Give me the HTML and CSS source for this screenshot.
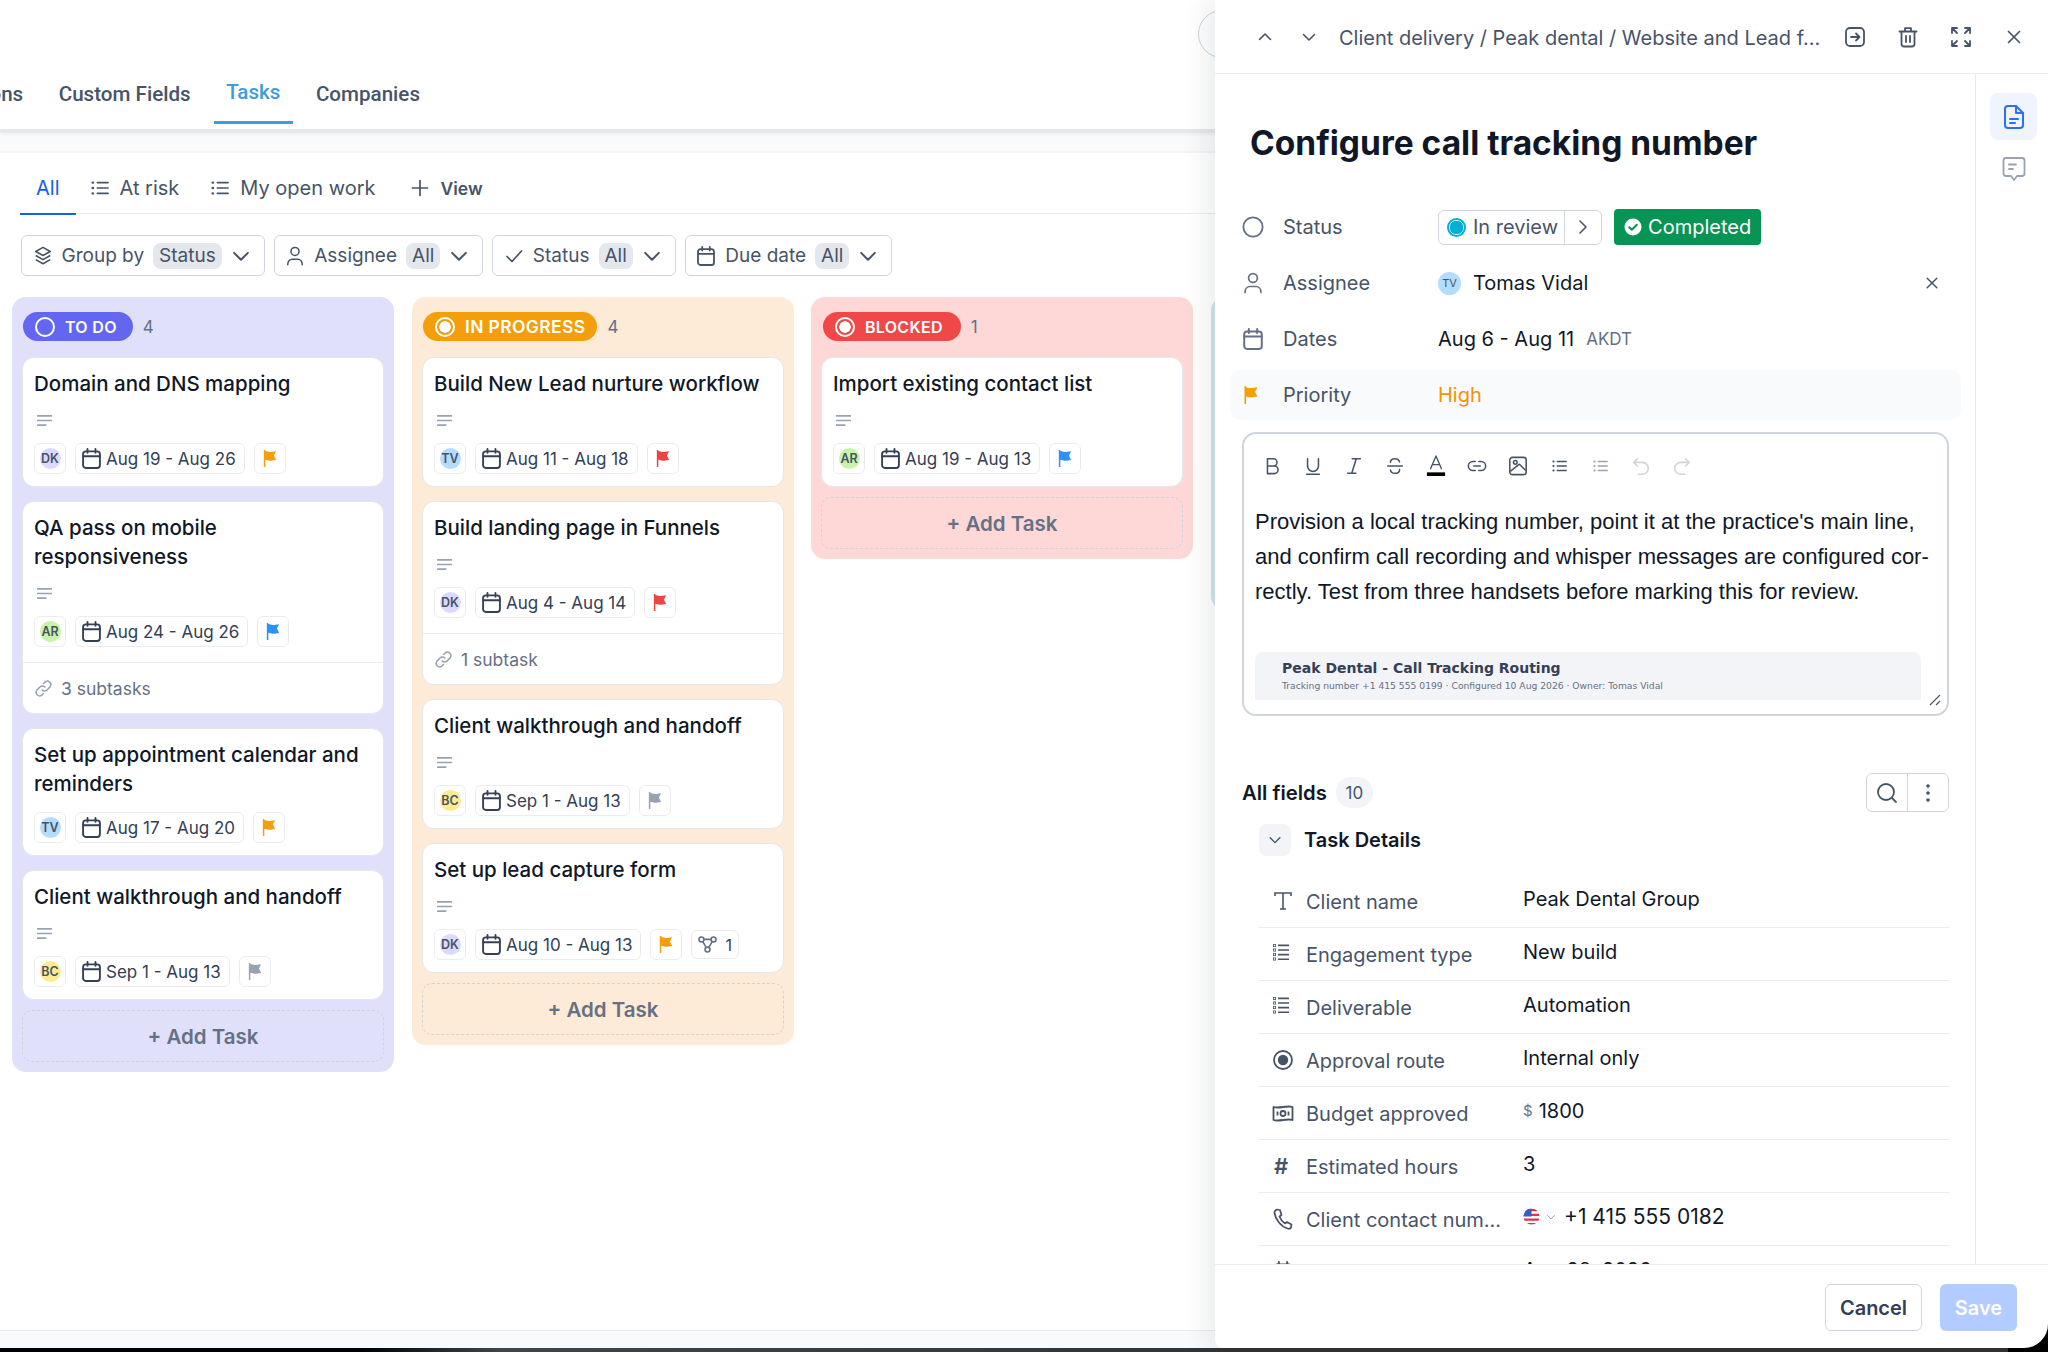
FILE: index.html
```html
<!DOCTYPE html>
<html lang="en">
<head>
<meta charset="utf-8">
<title>Tasks</title>
<link rel="stylesheet" href="styles.css">
</head>
<body>
<svg class="sprite" width="0" height="0" aria-hidden="true">
  <defs>
    <symbol id="flag" viewBox="0 0 16 20"><path fill="currentColor" d="M1.5 1h1.6v1.2c3 1.2 6 1 11.4.1l-2.4 4.6 2.4 4.6c-5.4.9-8.4 1.1-11.4-.1V19H1.5z"/></symbol>
    <symbol id="cal" viewBox="0 0 18 20"><g fill="none" stroke="currentColor" stroke-width="1.8" stroke-linecap="round"><rect x="1" y="3.2" width="16" height="15.8" rx="2.6"/><path d="M1 7.8h16M5.2 1v3.6M12.8 1v3.6"/></g></symbol>
    <symbol id="lines" viewBox="0 0 18 14"><path d="M1 2h16M1 7h16M1 12h10" fill="none" stroke="currentColor" stroke-width="1.8"/></symbol>
    <symbol id="link" viewBox="0 0 20 20"><g fill="none" stroke="currentColor" stroke-width="1.6" stroke-linecap="round"><path d="M8.5 11.5a3.6 3.6 0 0 0 5.2 0l3.2-3.2a3.7 3.7 0 0 0-5.2-5.2l-1.6 1.6"/><path d="M11.5 8.5a3.6 3.6 0 0 0-5.2 0l-3.2 3.2a3.7 3.7 0 0 0 5.2 5.2l1.6-1.6"/></g></symbol>
    <symbol id="chev" viewBox="0 0 16 16"><path d="M2.5 5.5 8 11l5.5-5.5" fill="none" stroke="currentColor" stroke-width="1.6" stroke-linecap="round" stroke-linejoin="round"/></symbol>
    <symbol id="list" viewBox="0 0 20 18"><g fill="none" stroke="currentColor" stroke-width="1.8" stroke-linecap="round"><path d="M7 3h12M7 9h12M7 15h12"/><path d="M1.8 3h.4M1.8 9h.4M1.8 15h.4" stroke-width="2.6"/></g></symbol>
    <symbol id="person" viewBox="0 0 20 22"><g fill="none" stroke="currentColor" stroke-width="1.7" stroke-linecap="round"><circle cx="10" cy="6" r="4.4"/><path d="M2 20.5c0-4 2.6-6 5-6h6c2.4 0 5 2 5 6"/></g></symbol>
    <symbol id="x" viewBox="0 0 16 16"><path d="m2.5 2.5 11 11m0-11-11 11" fill="none" stroke="currentColor" stroke-width="1.7" stroke-linecap="round"/></symbol>
    <symbol id="fieldlist" viewBox="0 0 18 18"><path fill="currentColor" d="M1 1h3v3H1zM6 1.6h11v1.6H6zM1 5.5h3v3H1zM6 6.2h11v1.6H6zM1 10h3v3H1zM6 10.8h11v1.6H6zM1 14.5h3v3H1zM6 15.4h11V17H6z"/><path fill="#fff" d="M1.8 1.8h1.4v1.4H1.8zM1.8 6.3h1.4v1.4H1.8zM1.8 10.8h1.4v1.4H1.8zM1.8 15.3h1.4v1.4H1.8z"/></symbol>
  </defs>
</svg>

<div class="screen">
  <header class="topbar">
    <div class="top-pill"></div>
    <nav class="tabs">
      <a class="tab">Automations</a>
      <a class="tab">Custom Fields</a>
      <a class="tab tab-active">Tasks</a>
      <a class="tab">Companies</a>
    </nav>
  </header>
  <div class="band"></div>

  <main class="main">
    <div class="views">
      <a class="view view-active">All</a>
      <a class="view"><svg class="ic18"><use href="#list"/></svg>At risk</a>
      <a class="view"><svg class="ic18"><use href="#list"/></svg>My open work</a>
      <a class="view view-add"><svg class="ic18" viewBox="0 0 18 18"><path d="M9 1.5v15M1.5 9h15" fill="none" stroke="currentColor" stroke-width="1.7" stroke-linecap="round"/></svg>View</a>
    </div>

    <div class="filters">
      <button class="filter"><svg class="ic20" viewBox="0 0 20 22"><g fill="none" stroke="currentColor" stroke-width="1.7" stroke-linejoin="round"><path d="m10 1.5 8 4.5-8 4.5L2 6z"/><path d="m2 10.5 8 4.5 8-4.5M2 15l8 4.5 8-4.5"/></g></svg><span>Group by</span><b class="pill">Status</b><svg class="ic-fchev"><use href="#chev"/></svg></button>
      <button class="filter"><svg class="ic20"><use href="#person"/></svg><span>Assignee</span><b class="pill">All</b><svg class="ic-fchev"><use href="#chev"/></svg></button>
      <button class="filter"><svg class="ic20" viewBox="0 0 20 20"><path d="m3 10.5 5 5L17.5 5" fill="none" stroke="currentColor" stroke-width="1.7" stroke-linecap="round" stroke-linejoin="round"/></svg><span>Status</span><b class="pill">All</b><svg class="ic-fchev"><use href="#chev"/></svg></button>
      <button class="filter"><svg class="ic20"><use href="#cal"/></svg><span>Due date</span><b class="pill">All</b><svg class="ic-fchev"><use href="#chev"/></svg></button>
    </div>

    <div class="board">
      <section class="col col-todo">
        <div class="col-head"><span class="status s-todo"><i class="ring ring-empty"></i>TO DO</span><span class="count">4</span></div>
        <article class="card">
          <h3>Domain and DNS mapping</h3>
          <div class="desc"><svg class="ic-lines"><use href="#lines"/></svg></div>
          <div class="chips"><span class="chip chip-av"><i class="av av-dk">DK</i></span><span class="chip chip-date"><svg class="ic-cal"><use href="#cal"/></svg>Aug 19 - Aug 26</span><span class="chip chip-flag f-orange"><svg class="ic-flag"><use href="#flag"/></svg></span></div>
        </article>
        <article class="card">
          <h3>QA pass on mobile<br>responsiveness</h3>
          <div class="desc"><svg class="ic-lines"><use href="#lines"/></svg></div>
          <div class="chips"><span class="chip chip-av"><i class="av av-ar">AR</i></span><span class="chip chip-date"><svg class="ic-cal"><use href="#cal"/></svg>Aug 24 - Aug 26</span><span class="chip chip-flag f-blue"><svg class="ic-flag"><use href="#flag"/></svg></span></div>
          <div class="subs"><svg class="ic-link"><use href="#link"/></svg>3 subtasks</div>
        </article>
        <article class="card">
          <h3>Set up appointment calendar and reminders</h3>
          <div class="chips chips-tight"><span class="chip chip-av"><i class="av av-tv">TV</i></span><span class="chip chip-date"><svg class="ic-cal"><use href="#cal"/></svg>Aug 17 - Aug 20</span><span class="chip chip-flag f-orange"><svg class="ic-flag"><use href="#flag"/></svg></span></div>
        </article>
        <article class="card">
          <h3>Client walkthrough and handoff</h3>
          <div class="desc"><svg class="ic-lines"><use href="#lines"/></svg></div>
          <div class="chips"><span class="chip chip-av"><i class="av av-bc">BC</i></span><span class="chip chip-date"><svg class="ic-cal"><use href="#cal"/></svg>Sep 1 - Aug 13</span><span class="chip chip-flag f-gray"><svg class="ic-flag"><use href="#flag"/></svg></span></div>
        </article>
        <button class="add">+ Add Task</button>
      </section>

      <section class="col col-prog">
        <div class="col-head"><span class="status s-prog"><i class="ring"></i>IN PROGRESS</span><span class="count">4</span></div>
        <article class="card">
          <h3>Build New Lead nurture workflow</h3>
          <div class="desc"><svg class="ic-lines"><use href="#lines"/></svg></div>
          <div class="chips"><span class="chip chip-av"><i class="av av-tv">TV</i></span><span class="chip chip-date"><svg class="ic-cal"><use href="#cal"/></svg>Aug 11 - Aug 18</span><span class="chip chip-flag f-red"><svg class="ic-flag"><use href="#flag"/></svg></span></div>
        </article>
        <article class="card">
          <h3>Build landing page in Funnels</h3>
          <div class="desc"><svg class="ic-lines"><use href="#lines"/></svg></div>
          <div class="chips"><span class="chip chip-av"><i class="av av-dk">DK</i></span><span class="chip chip-date"><svg class="ic-cal"><use href="#cal"/></svg>Aug 4 - Aug 14</span><span class="chip chip-flag f-red"><svg class="ic-flag"><use href="#flag"/></svg></span></div>
          <div class="subs"><svg class="ic-link"><use href="#link"/></svg>1 subtask</div>
        </article>
        <article class="card">
          <h3>Client walkthrough and handoff</h3>
          <div class="desc"><svg class="ic-lines"><use href="#lines"/></svg></div>
          <div class="chips"><span class="chip chip-av"><i class="av av-bc">BC</i></span><span class="chip chip-date"><svg class="ic-cal"><use href="#cal"/></svg>Sep 1 - Aug 13</span><span class="chip chip-flag f-gray"><svg class="ic-flag"><use href="#flag"/></svg></span></div>
        </article>
        <article class="card">
          <h3>Set up lead capture form</h3>
          <div class="desc"><svg class="ic-lines"><use href="#lines"/></svg></div>
          <div class="chips"><span class="chip chip-av"><i class="av av-dk">DK</i></span><span class="chip chip-date"><svg class="ic-cal"><use href="#cal"/></svg>Aug 10 - Aug 13</span><span class="chip chip-flag f-orange"><svg class="ic-flag"><use href="#flag"/></svg></span><span class="chip chip-branch"><svg class="ic-branch" viewBox="0 0 20 18"><g fill="none" stroke="currentColor" stroke-width="1.7"><circle cx="3.6" cy="3.6" r="2.6"/><circle cx="16.4" cy="3.6" r="2.6"/><circle cx="10" cy="14.4" r="2.6"/><path d="m5 6 3.6 6M15 6l-3.6 6M6.2 3.6h7.6"/></g></svg>1</span></div>
        </article>
        <button class="add">+ Add Task</button>
      </section>

      <section class="col col-block">
        <div class="col-head"><span class="status s-block"><i class="ring"></i>BLOCKED</span><span class="count">1</span></div>
        <article class="card">
          <h3>Import existing contact list</h3>
          <div class="desc"><svg class="ic-lines"><use href="#lines"/></svg></div>
          <div class="chips"><span class="chip chip-av"><i class="av av-ar">AR</i></span><span class="chip chip-date"><svg class="ic-cal"><use href="#cal"/></svg>Aug 19 - Aug 13</span><span class="chip chip-flag f-blue"><svg class="ic-flag"><use href="#flag"/></svg></span></div>
        </article>
        <button class="add">+ Add Task</button>
      </section>

      <section class="col col-teal"></section>
    </div>
  </main>

  <div class="foot-band"></div>
  <div class="foot-black"></div>

  <aside class="drawer">
    <div class="panel">
      <div class="panel-head">
        <button class="ph-btn"><svg class="ic16 flip"><use href="#chev"/></svg></button>
        <button class="ph-btn"><svg class="ic16"><use href="#chev"/></svg></button>
        <div class="crumb">Client delivery / Peak dental / Website and Lead f...</div>
        <div class="ph-actions">
          <svg class="ic22" viewBox="0 0 22 22"><g fill="none" stroke="currentColor" stroke-width="1.8" stroke-linecap="round" stroke-linejoin="round"><rect x="2" y="2" width="18" height="18" rx="4"/><path d="M7 11h8M12 7.5l3.5 3.5-3.5 3.5"/></g></svg>
          <svg class="ic22" viewBox="0 0 22 22"><g fill="none" stroke="currentColor" stroke-width="1.8" stroke-linecap="round" stroke-linejoin="round"><path d="M2.5 5.5h17M8 5.5V2.2h6v3.3M4.5 5.5V18a2.5 2.5 0 0 0 2.5 2.5h8a2.5 2.5 0 0 0 2.5-2.5V5.5M9 10v6M13 10v6"/></g></svg>
          <svg class="ic22" viewBox="0 0 22 22"><g fill="none" stroke="currentColor" stroke-width="1.8" stroke-linecap="round" stroke-linejoin="round"><path d="M2 7V2h5M15 2h5v5M2 15v5h5M20 15v5h-5M2.5 2.5 7 7M19.5 2.5 15 7M2.5 19.5 7 15M19.5 19.5 15 15"/></g></svg>
          <svg class="ic22" viewBox="-3 -3 22 22"><use href="#x" width="16" height="16"/></svg>
        </div>
      </div>

      <div class="panel-body">
        <div class="content">
          <h1 class="title">Configure call tracking number</h1>

          <div class="prop">
            <svg class="prop-ic" viewBox="0 0 24 24"><circle cx="12" cy="12" r="10.5" fill="none" stroke="currentColor" stroke-width="2"/></svg>
            <span class="prop-label">Status</span>
            <div class="prop-val">
              <div class="state"><span class="state-main"><i class="state-dot"></i>In review</span><span class="state-next"><svg class="ic12" viewBox="0 0 12 16"><path d="m3 2 6 6-6 6" fill="none" stroke="currentColor" stroke-width="1.6" stroke-linecap="round" stroke-linejoin="round"/></svg></span></div>
              <span class="done"><svg class="ic18b" viewBox="0 0 18 18"><circle cx="9" cy="9" r="8.5" fill="#fff"/><path d="m5.2 9.2 2.6 2.6 5-5" fill="none" stroke="#079455" stroke-width="2" stroke-linecap="round" stroke-linejoin="round"/></svg>Completed</span>
            </div>
          </div>
          <div class="prop">
            <svg class="prop-ic"><use href="#person"/></svg>
            <span class="prop-label">Assignee</span>
            <div class="prop-val prop-grow"><i class="av-lg">TV</i><span>Tomas Vidal</span><svg class="ic-close"><use href="#x"/></svg></div>
          </div>
          <div class="prop">
            <svg class="prop-ic"><use href="#cal"/></svg>
            <span class="prop-label">Dates</span>
            <div class="prop-val"><span>Aug 6 - Aug 11</span><small class="tz">AKDT</small></div>
          </div>
          <div class="prop prop-hi">
            <svg class="prop-ic prop-flag"><use href="#flag"/></svg>
            <span class="prop-label">Priority</span>
            <div class="prop-val high">High</div>
          </div>

          <div class="editor">
            <div class="toolbar">
              <span class="tb"><svg viewBox="0 0 22 22"><path d="M6 3h6.5a4 4 0 0 1 0 8H6zM6 11h7.5a4.2 4.2 0 0 1 0 8.400H6z" fill="none" stroke="currentColor" stroke-width="1.7" stroke-linejoin="round"/></svg></span>
              <span class="tb"><svg viewBox="0 0 22 22"><path d="M5 3v8a6 6 0 0 0 12 0V3M4 20h14" fill="none" stroke="currentColor" stroke-width="1.7" stroke-linecap="round"/></svg></span>
              <span class="tb"><svg viewBox="0 0 22 22"><path d="M9 3h9M4 19h9M13.500 3 8.500 19" fill="none" stroke="currentColor" stroke-width="1.7" stroke-linecap="round"/></svg></span>
              <span class="tb"><svg viewBox="0 0 22 22"><path d="M3 11h16M16 6.500C15.500 4 13.500 3 11 3 8 3 6 4.500 6 7M6 15.500C6.500 18 8.500 19 11 19c3 0 5-1.500 5-4" fill="none" stroke="currentColor" stroke-width="1.7" stroke-linecap="round"/></svg></span>
              <span class="tb tb-color"><svg viewBox="0 0 22 24"><path d="m5 15 6-14 6 14M7.200 10.500h7.600" fill="none" stroke="currentColor" stroke-width="1.500" stroke-linecap="round" stroke-linejoin="round"/><rect x="1" y="19" width="20" height="4" fill="#000"/></svg></span>
              <span class="tb"><svg viewBox="0 0 22 22"><path d="M9 6H6.500a5 5 0 0 0 0 10H9M13 6h2.500a5 5 0 0 1 0 10H13M7.500 11h7" fill="none" stroke="currentColor" stroke-width="1.700" stroke-linecap="round"/></svg></span>
              <span class="tb"><svg viewBox="0 0 22 22"><g fill="none" stroke="currentColor" stroke-width="1.700" stroke-linejoin="round"><rect x="2" y="1.500" width="18" height="19" rx="3"/><circle cx="8" cy="7" r="2"/><path d="m2.500 17 10-8 7 7"/></g></svg></span>
              <span class="tb tb-sm"><svg><use href="#list"/></svg></span>
              <span class="tb tb-sm tb-faint"><svg><use href="#list"/></svg></span>
              <span class="tb tb-off"><svg viewBox="0 0 22 22"><path d="M7 3 3 7l4 4M3 7h9.500a6.500 6.500 0 0 1 0 13H8" fill="none" stroke="currentColor" stroke-width="1.700" stroke-linecap="round" stroke-linejoin="round"/></svg></span>
              <span class="tb tb-off"><svg viewBox="0 0 22 22"><path d="m15 3 4 4-4 4M19 7H9.500a6.500 6.500 0 0 0 0 13H14" fill="none" stroke="currentColor" stroke-width="1.700" stroke-linecap="round" stroke-linejoin="round"/></svg></span>
            </div>
            <p class="ed-text">Provision a local tracking number, point it at the practice's main line,<br>and confirm call recording and whisper messages are configured cor-<br>rectly. Test from three handsets before marking this for review.</p>
            <div class="ed-figure">
              <div class="fig-title">Peak Dental - Call Tracking Routing</div>
              <div class="fig-sub">Tracking number +1 415 555 0199 · Configured 10 Aug 2026 · Owner: Tomas Vidal</div>
            </div>
            <svg class="grip" viewBox="0 0 12 12"><path d="M11 1 1 11M11 7l-4 4" fill="none" stroke="#475467" stroke-width="1.100"/></svg>
          </div>

          <div class="fields-head">
            <span class="fields-title">All fields</span><span class="fields-count">10</span>
            <div class="btn-group">
              <span class="bg-btn"><svg class="ic22" viewBox="0 0 22 22"><g fill="none" stroke="currentColor" stroke-width="1.800" stroke-linecap="round"><circle cx="10" cy="10" r="8"/><path d="m16 16 4 4"/></g></svg></span>
              <span class="bg-btn bg-narrow"><svg class="ic22" viewBox="0 0 22 22"><g fill="currentColor"><circle cx="11" cy="4" r="1.800"/><circle cx="11" cy="11" r="1.800"/><circle cx="11" cy="18" r="1.800"/></g></svg></span>
            </div>
          </div>

          <div class="group-head"><span class="group-chev"><svg class="ic14"><use href="#chev"/></svg></span>Task Details</div>

          <div class="fields">
            <div class="field"><span class="f-ic"><svg class="ic22" viewBox="0 0 22 22"><path d="M3 6V3h16v3M11 3v16M8 19h6" fill="none" stroke="currentColor" stroke-width="1.600"/></svg></span><span class="f-label">Client name</span><span class="f-val">Peak Dental Group</span></div>
            <div class="field"><span class="f-ic"><svg class="ic18"><use href="#fieldlist"/></svg></span><span class="f-label">Engagement type</span><span class="f-val">New build</span></div>
            <div class="field"><span class="f-ic"><svg class="ic18"><use href="#fieldlist"/></svg></span><span class="f-label">Deliverable</span><span class="f-val">Automation</span></div>
            <div class="field"><span class="f-ic"><svg class="ic22" viewBox="0 0 22 22"><circle cx="11" cy="11" r="9" fill="none" stroke="currentColor" stroke-width="1.800"/><circle cx="11" cy="11" r="5.200" fill="currentColor"/></svg></span><span class="f-label">Approval route</span><span class="f-val">Internal only</span></div>
            <div class="field"><span class="f-ic"><svg class="ic22" viewBox="0 0 22 22"><g fill="none" stroke="currentColor" stroke-width="1.800" stroke-linejoin="round"><path d="M1.500 5c6 2 13-2 19 0v13c-6-2-13 2-19 0z"/><circle cx="11" cy="11.500" r="2.500"/><path d="M5.500 9.500v4M16.500 9.500v4"/></g></svg></span><span class="f-label">Budget approved</span><span class="f-val"><small class="cur">$</small>1800</span></div>
            <div class="field"><span class="f-ic f-hash">#</span><span class="f-label">Estimated hours</span><span class="f-val">3</span></div>
            <div class="field"><span class="f-ic"><svg class="ic22" viewBox="0 0 22 22"><path d="M5 1.500 8 2l1.500 5-2 1.500c1 2.800 3 5.500 5.500 7l2-1.500 4.500 2.500-.5 3c-.5 1-2 1.500-3.500 1C9 18.500 3.500 11.500 2.500 5c-.2-1.500 1-3 2.500-3.500z" fill="none" stroke="currentColor" stroke-width="1.700" stroke-linejoin="round"/></svg></span><span class="f-label">Client contact num...</span><span class="f-val f-phone"><svg class="ic-us" viewBox="0 0 18 18"><defs><clipPath id="round"><circle cx="9" cy="9" r="8.500"/></clipPath></defs><g clip-path="url(#round)"><rect width="18" height="18" fill="#fff"/><path d="M0 1h18v2.500H0zM0 6h18v2.500H0zM0 11h18v2.500H0zM0 16h18v2.500H0z" fill="#e5304a"/><rect width="9" height="9" fill="#3b5cc4"/></g></svg><svg class="ic-uschev"><use href="#chev"/></svg>+1 415 555 0182</span></div>
            <div class="field"><span class="f-ic"><svg class="ic22"><use href="#cal"/></svg></span><span class="f-label">Start date</span><span class="f-val">Aug 28, 2026</span></div>
          </div>
        </div>

        <div class="rail">
          <span class="rail-btn rail-on"><svg class="ic26" viewBox="0 0 22 26"><g fill="none" stroke="currentColor" stroke-width="2" stroke-linecap="round" stroke-linejoin="round"><path d="M5 2h8l7 7v12a3 3 0 0 1-3 3H5a3 3 0 0 1-3-3V5a3 3 0 0 1 3-3z"/><path d="M13 2v7h7M7 15h8M7 19h5"/></g></svg></span>
          <span class="rail-btn rail-off"><svg class="ic26" viewBox="0 0 24 26"><g fill="none" stroke="currentColor" stroke-width="1.800" stroke-linecap="round" stroke-linejoin="round"><path d="M4 2h16a2.500 2.500 0 0 1 2.500 2.500v13A2.500 2.500 0 0 1 20 20h-5l-3 4-3-4H4a2.500 2.500 0 0 1-2.500-2.500v-13A2.500 2.500 0 0 1 4 2z"/><path d="M7 8.500h7M7 13h4"/></g></svg></span>
        </div>
      </div>

      <div class="panel-foot">
        <button class="btn btn-cancel">Cancel</button>
        <button class="btn btn-save">Save</button>
      </div>
    </div>
  </aside>
</div>
</body>
</html>
```
FILE: styles.css
```css
* { box-sizing: border-box; }
html, body { margin: 0; padding: 0; background: #fff; }
body { font-family: "Inter", "Liberation Sans", sans-serif; color: #101828; }
button { font-family: inherit; }
svg { display: block; flex: none; }
.sprite { position: absolute; }

.screen { position: relative; width: 2048px; height: 1352px; overflow: hidden; display: flex; flex-direction: column; background: #fff; }

/* top bar */
.topbar { position: relative; height: 132px; flex: none; border-bottom: 3px solid #e4e7ec; box-shadow: 0 2px 3px rgba(16,24,40,.08); display: flex; align-items: flex-end; }
.top-pill { position: absolute; left: 1198px; top: 10px; width: 100px; height: 48px; border: 1.5px solid #d0d5dd; border-radius: 24px; }
.tabs { display: flex; gap: 35.5px; margin-left: -95px; height: 69px; font-family: "Roboto", sans-serif; }
.tab { padding: 19px 0 0; font-size: 20.6px; line-height: 30px; font-weight: 500; color: #475467; position: relative; white-space: nowrap; }
.tab-active { color: #3b9ddd; margin-top: -2px; padding-left: 12px; padding-right: 13px; margin-left: -12px; margin-right: -13px; height: 66px; border-bottom: 3px solid #38a0db; }
.band { height: 21px; flex: none; background: #f9fafb; border-bottom: 2px solid #f2f4f7; }

/* main */
.main { flex: 1; min-height: 0; display: flex; flex-direction: column; }
.views { height: 61px; margin-left: 20px; display: flex; align-items: center; border-bottom: 1.5px solid #eaecf0; color: #475467; font-size: 20px; padding-top: 10px; }
.view { display: flex; align-items: center; height: 50px; gap: 11px; margin-right: 32px; }
.view-active { color: #155eef; height: 51px; padding: 0 16px; margin-right: 15px; border-bottom: 2px solid #155eef; position: relative; top: 1px; }
.view-add { font-size: 17.5px; font-weight: 600; gap: 11px; margin-left: 4px; }
.ic18 { width: 18px; height: 18px; }
.ic20 { width: 20px; height: 20px; }
.ic16 { width: 16px; height: 16px; }
.ic14 { width: 14px; height: 14px; }
.ic12 { width: 12px; height: 16px; }
.ic22 { width: 22px; height: 22px; }
.ic26 { width: 26px; height: 26px; }
.ic18b { width: 18px; height: 18px; }
.ic-fchev { width: 20px; height: 20px; }

.filters { display: flex; gap: 9px; margin: 21px 0 0 21px; }
.filter { height: 41px; display: flex; align-items: center; gap: 9px; padding: 0 13px 0 10.5px; background: #fff; border: 1.5px solid #d0d5dd; border-radius: 6px; color: #475467; font-size: 19px; }
.pill { font-weight: 400; background: #e4e7ec; padding: 0 6px; height: 26px; line-height: 26px; border-radius: 8px; }

/* board */
.board { display: flex; gap: 18px; align-items: flex-start; margin: 21px 0 0 12px; }
.col { width: 382px; flex: none; border-radius: 14px; padding: 15px 10px 10px; }
.col-todo { background: #e0e0fb; }
.col-prog { background: #fdead7; }
.col-block { background: #fed7d7; margin-left: -1px; }
.col-teal { background: #cfe6ec; height: 313px; }
.col-head { display: flex; align-items: center; height: 29px; margin-bottom: 16px; padding-left: 1px; gap: 10px; }
.status { height: 29px; display: inline-flex; align-items: center; gap: 10px; padding: 0 16px 0 12px; border-radius: 15px; color: #fff; font-size: 16px; font-weight: 600; letter-spacing: .3px; }
.s-todo { background: #6366f1; }
.s-prog { background: #f59e0b; font-size: 17.5px; letter-spacing: .35px; padding-right: 12px; }
.s-block { background: #f04848; padding-right: 18px; margin-left: 1px; }
.ring { width: 20px; height: 20px; border-radius: 50%; border: 2px solid #fff; background: radial-gradient(circle, #fff 0 5.5px, transparent 6px); flex: none; }
.ring-empty { background: none; }
.count { font-size: 17px; color: #667085; }

.card { background: #fff; border: 1px solid #e4e7ec; border-radius: 12px; margin-bottom: 14px; overflow: hidden; }
.card h3 { margin: 11px 11px 0; font-size: 20.5px; line-height: 29px; font-weight: 500; color: #101828; }
.desc { height: 45px; margin: 0 13px; display: flex; align-items: center; color: #98a2b3; }
.ic-lines { width: 17px; height: 13px; }
.chips { display: flex; gap: 9px; margin: 0 11px 12px; align-items: center; }
.chips-tight { margin-top: 14px; }
.chip { height: 31px; display: inline-flex; align-items: center; border: 1.5px solid #eaecf0; border-radius: 6px; background: #fff; font-size: 17px; color: #344054; }
.chip-av { width: 32px; justify-content: center; }
.chip-date { padding: 0 8px 0 6px; gap: 5px; }
.chip-flag { width: 32px; justify-content: center; }
.chip-branch { height: 29px; padding: 0 6px; gap: 8px; font-size: 16px; }
.ic-cal { width: 19px; height: 21px; color: #344054; }
.ic-flag { width: 16px; height: 19px; }
.ic-branch { width: 19px; height: 17px; color: #667085; }
.f-orange { color: #f59e0b; }
.f-red { color: #ef4444; }
.f-blue { color: #2e90fa; }
.f-gray { color: #98a2b3; }
.av { width: 21px; height: 21px; border-radius: 50%; display: flex; align-items: center; justify-content: center; font-style: normal; font-size: 12.5px; font-weight: 600; color: #475467; }
.av-dk { background: #dcdafc; }
.av-tv { background: #b2ddff; }
.av-ar { background: #c8f3a8; }
.av-bc { background: #fdeb94; }
.subs { height: 51px; margin-top: 15px; border-top: 1px solid #eaecf0; display: flex; align-items: center; gap: 8px; padding-left: 11px; font-size: 17.5px; color: #667085; }
.ic-link { width: 19px; height: 19px; color: #98a2b3; }
.add { display: block; width: 100%; height: 52px; margin-top: -4px; background: transparent; border: 1.5px dashed #cfd4dc; border-radius: 10px; color: #667085; font-size: 20.5px; font-weight: 600; }

/* footer */
.foot-band { height: 18px; flex: none; background: #f9fafb; border-top: 1px solid #eaecf0; }
.foot-black { height: 4px; flex: none; background: linear-gradient(90deg, #000 0 360px, #444 500px, #333 1200px); }

/* drawer */
.drawer { position: absolute; top: 0; right: 0; bottom: 0; width: 833px; background: linear-gradient(#000, #000) right bottom / 40px 40px no-repeat; }
.panel { height: 1348px; background: #fff; border-radius: 0 0 24px 8px; display: flex; flex-direction: column; box-shadow: -10px 0 24px rgba(16,24,40,.08); overflow: hidden; }
.panel-head { height: 74px; flex: none; display: flex; align-items: center; border-bottom: 1.5px solid #eaecf0; padding-left: 42px; color: #475467; }
.ph-btn { width: 44px; height: 24px; padding: 0; background: none; border: 0; display: flex; align-items: center; color: #475467; }
.flip { transform: scaleY(-1); }
.crumb { margin-left: -6px; width: 492px; font-size: 20px; white-space: nowrap; line-height: 24px; padding-top: 3px; }
.ph-actions { display: flex; gap: 31px; margin-left: 13px; }
.panel-body { flex: 1; min-height: 0; display: flex; overflow: hidden; }
.content { width: 760px; flex: none; padding: 49px 14px 0 15px; overflow: hidden; }
.title { margin: 0 0 39px 20px; font-size: 33.5px; line-height: 40px; font-weight: 700; color: #101828; white-space: nowrap; }
.prop { height: 50px; margin-bottom: 6px; display: flex; align-items: center; padding-left: 12px; border-radius: 10px; font-size: 20px; }
.prop-hi { background: #f9fafb; }
.prop-ic { width: 22px; height: 22px; color: #667085; }
.prop-flag { color: #f59e0b; width: 18px; height: 20px; margin-right: 4px; }
.prop-label { margin-left: 19px; width: 155px; color: #475467; flex: none; }
.prop-val { display: flex; align-items: center; gap: 12px; color: #101828; }
.prop-grow { flex: 1; }
.state { display: flex; height: 35px; border: 1.5px solid #d0d5dd; border-radius: 6px; align-items: center; color: #475467; }
.state-main { display: flex; align-items: center; gap: 7px; padding: 0 6px 0 8px; height: 100%; border-right: 1.5px solid #d0d5dd; }
.state-dot { width: 19px; height: 19px; border-radius: 50%; border: 2px solid #06aed4; background: radial-gradient(circle, #06aed4 0 6.500px, #fff 7px); }
.state-next { width: 36px; display: flex; justify-content: center; color: #475467; }
.done { height: 36px; display: inline-flex; align-items: center; gap: 6px; padding: 0 10px; border-radius: 4px; background: #079455; color: #fff; }
.av-lg { width: 23px; height: 23px; border-radius: 50%; background: #b2ddff; display: flex; align-items: center; justify-content: center; font-style: normal; font-size: 11px; color: #475467; }
.ic-close { width: 14px; height: 14px; margin-left: auto; margin-right: 22px; color: #475467; }
.tz { font-size: 17px; color: #667085; margin-left: 0; }
.high { color: #f79009; }

.editor { position: relative; margin: 12px 12px 0; width: 707px; height: 284px; border: 2px solid #d0d5dd; border-radius: 14px; padding: 0 11px; }
.toolbar { display: flex; height: 64px; align-items: center; margin-left: -4px; color: #475467; }
.tb { width: 41.100px; display: flex; justify-content: center; }
.tb svg { width: 20px; height: 20px; }
.tb-color svg { width: 20px; height: 22px; }
.tb-sm svg { width: 15px; height: 14px; }
.tb-faint { color: #98a2b3; }
.tb-off { color: #d0d5dd; }
.ed-text { margin: 6px 0 0; font-family: "Liberation Sans", sans-serif; font-size: 22px; line-height: 35px; color: #101828; white-space: nowrap; }
.ed-figure { margin-top: 43px; width: 666px; height: 48px; overflow: hidden; background: #f2f4f7; border-radius: 8px 8px 0 0; padding: 8px 27px 0; font-family: "DejaVu Sans", sans-serif; }
.fig-title { font-size: 14px; line-height: 17px; font-weight: 700; color: #344054; white-space: nowrap; }
.fig-sub { font-size: 9.200px; line-height: 12px; margin-top: 3px; color: #667085; white-space: nowrap; }
.grip { position: absolute; right: 6px; bottom: 8px; width: 12px; height: 12px; }

.fields-head { display: flex; align-items: center; height: 39px; margin: 57px 12px 0; }
.fields-title { font-size: 20.300px; font-weight: 600; color: #101828; }
.fields-count { width: 37px; height: 31px; margin-left: 9px; border-radius: 15px; background: #f2f4f7; display: flex; align-items: center; justify-content: center; font-size: 17px; color: #475467; }
.btn-group { margin-left: auto; display: flex; height: 39px; border: 1.5px solid #d0d5dd; border-radius: 6px; color: #475467; }
.bg-btn { width: 40px; display: flex; align-items: center; justify-content: center; }
.bg-narrow { width: 41px; border-left: 1.5px solid #d0d5dd; }
.group-head { display: flex; align-items: center; height: 32px; margin: 12px 0 0 29px; gap: 13px; font-size: 20px; font-weight: 600; color: #101828; }
.group-chev { width: 32px; height: 32px; border-radius: 8px; background: #f2f4f7; display: flex; align-items: center; justify-content: center; color: #475467; }
.fields { margin: 19px 0 0 29px; width: 690px; }
.field { height: 53px; display: flex; border-bottom: 1.5px solid #eaecf0; font-size: 20px; }
.f-ic { width: 47px; padding: 15px 0 0 13px; color: #475467; flex: none; }
.f-hash { padding-top: 13px; font-size: 22px; font-weight: 600; line-height: 26px; padding-left: 15px; }
.f-label { width: 217px; flex: none; padding-top: 15px; line-height: 24px; color: #475467; white-space: nowrap; }
.f-val { padding-top: 12px; line-height: 24px; color: #101828; display: flex; align-items: flex-start; }
.cur { font-size: 15px; color: #667085; margin-right: 6px; }
.f-phone { align-items: center; height: 35px; font-size: 21px; }
.ic-us { width: 17px; height: 17px; }
.ic-uschev { width: 10px; height: 10px; margin: 0 8px 0 6px; color: #98a2b3; }

.rail { flex: 1; border-left: 1.5px solid #eaecf0; padding-top: 19px; display: flex; flex-direction: column; align-items: center; }
.rail-btn { width: 47px; height: 47px; border-radius: 8px; display: flex; align-items: center; justify-content: center; margin-left: 3px; }
.rail-on { background: #eff4ff; color: #2970ff; }
.rail-off { color: #98a2b3; margin-top: 5px; }
.panel-foot { height: 84px; flex: none; border-top: 1.5px solid #eaecf0; display: flex; justify-content: flex-end; align-items: flex-start; gap: 18px; padding: 19px 31px 0 0; }
.btn { height: 47px; border-radius: 6px; font-size: 20px; font-weight: 600; }
.btn-cancel { width: 97px; background: #fff; border: 1.5px solid #d0d5dd; color: #344054; }
.btn-save { width: 77px; background: #b2ccff; border: 0; color: #fff; }
```
